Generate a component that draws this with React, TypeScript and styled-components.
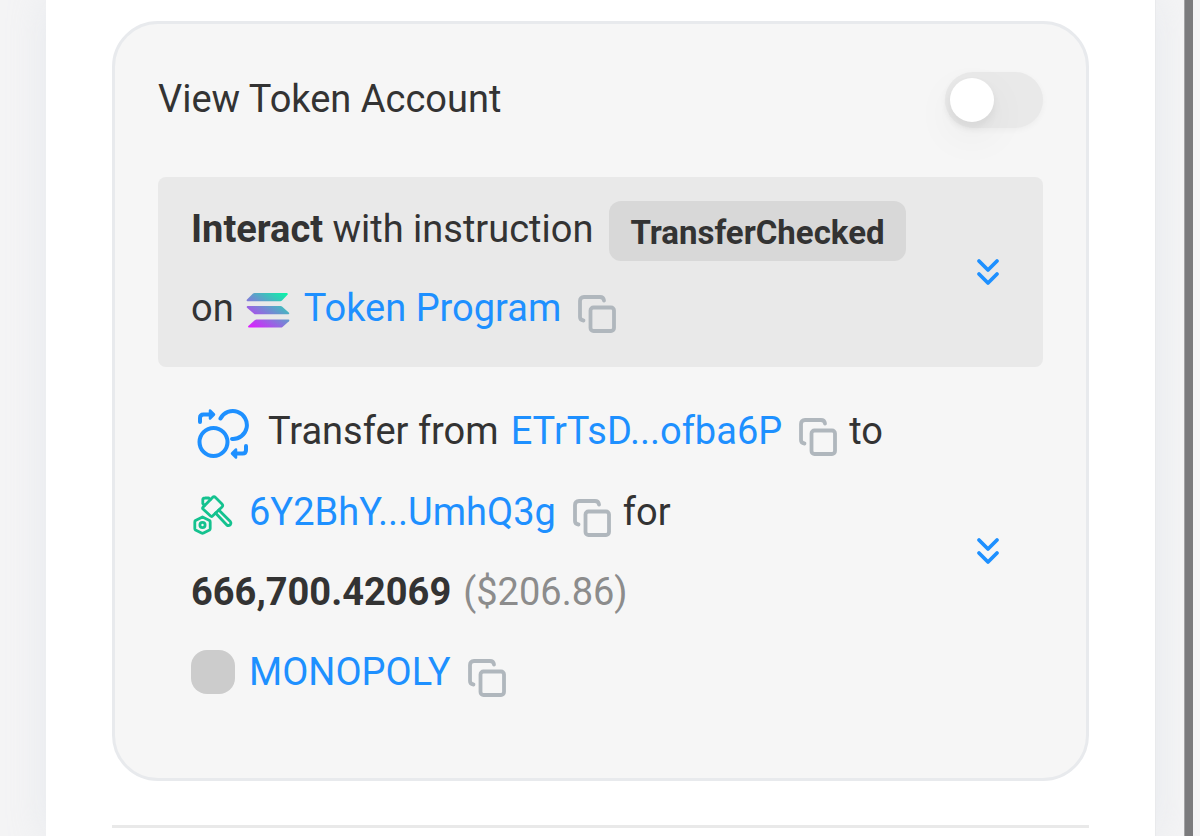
import React, { useState } from "react";
import styled, { createGlobalStyle } from "styled-components";

const GlobalStyle = createGlobalStyle`
  * { box-sizing: border-box; }
  body {
    margin: 0;
    background: #f4f4f5;
    color: #333333;
    font-family: Roboto, "Liberation Sans", sans-serif;
    font-size: 38px;
  }
`;

const Page = styled.div`
  display: flex;
  min-height: 100vh;
  padding-left: 46px;
  overflow: hidden;
`;

const Panel = styled.main`
  flex: 1;
  min-width: 0;
  padding: 21px 66px 8px;
  background: #ffffff;
  border-right: 1px solid #e9eaec;
  box-shadow: 0 0 36px rgba(200, 207, 222, 0.3);
`;

const ScrollTrack = styled.div`
  display: flex;
  justify-content: flex-end;
  width: 44px;
  padding-right: 7px;
`;

const ScrollThumb = styled.div`
  width: 9px;
  background: #7b7b7d;
  border-left: 1px solid #a3a3a5;
`;

const Card = styled.section`
  padding: 43px;
  background: #f6f6f6;
  border: 3px solid #e8eaed;
  border-radius: 46px;
`;

const CardHeader = styled.label`
  display: flex;
  align-items: center;
  justify-content: space-between;
  height: 66px;
  margin-bottom: 44px;
`;

const Title = styled.span`
  padding-bottom: 3px;
`;

const Switch = styled.input`
  appearance: none;
  display: flex;
  align-items: center;
  width: 98px;
  height: 56px;
  margin: 0;
  padding: 0 5px;
  background: #e9e9e9;
  border-radius: 28px;
  box-shadow: 0 2px 6px rgba(0, 0, 0, 0.04);
  cursor: pointer;

  &::before {
    content: "";
    width: 44px;
    height: 44px;
    background: #ffffff;
    border-radius: 50%;
    box-shadow: 0 5px 10px rgba(0, 0, 0, 0.06), 0 14px 44px rgba(0, 0, 0, 0.06);
  }

  &:checked {
    justify-content: flex-end;
    background: #1e90ff;
  }
`;

const Step = styled.div<{ $active?: boolean }>`
  display: flex;
  align-items: center;
  justify-content: space-between;
  padding: ${(p) => (p.$active ? "12px" : "23px")} 39px ${(p) => (p.$active ? "12px" : "23px")} 33px;
  background: ${(p) => (p.$active ? "#e9e9e9" : "transparent")};
  border-radius: 8px;
`;

const Lines = styled.div<{ $after?: number }>`
  flex: 1;
  min-width: 0;
  padding-bottom: ${(p) => p.$after ?? 0}px;
`;

const Line = styled.div<{ $height: number }>`
  display: flex;
  align-items: center;
  gap: 12px;
  height: ${(p) => p.$height}px;
  white-space: nowrap;
`;

const Muted = styled.span`
  color: #8c8c8c;
`;

const Link = styled.a`
  color: #1e90ff;
  text-decoration: none;
`;

const Tag = styled.span`
  margin: 4px 0 0 4px;
  padding: 3px 21px 0;
  background: #d8d8d8;
  border-radius: 12px;
  font-size: 33px;
  font-weight: 700;
  line-height: 57px;
`;

const IconButton = styled.button`
  display: flex;
  padding: 0;
  background: none;
  border: 0;
  cursor: pointer;
`;

const CopyButton = styled(IconButton)`
  margin-left: 5px;
  padding-top: 12px;
`;

const IconSlot = styled.span<{ $left?: number; $right?: number }>`
  display: flex;
  padding: 5px ${(p) => p.$right ?? 2}px 0 ${(p) => p.$left ?? 0}px;
`;

const TokenLogo = styled.span`
  width: 44px;
  height: 44px;
  margin-right: 2px;
  background: #cccccc;
  border-radius: 16px;
`;

const Divider = styled.hr`
  height: 3px;
  margin: 44px 0 0;
  background: #e9e9e9;
  border: 0;
`;

function Copy({ label }: { label: string }) {
  return (
    <CopyButton type="button" aria-label={label}>
      <svg width="38" height="38" viewBox="0 0 38 38" fill="none" stroke="#b0b7bd" strokeWidth="3.800" strokeLinecap="round">
        <rect x="12.500" y="12.500" width="23.500" height="23.500" rx="3" />
        <path d="M5.500 25.500 Q2 25 2 22 V6 Q2 2 6 2 H22 Q25.500 2 26 5.500" />
      </svg>
    </CopyButton>
  );
}

function Expand() {
  return (
    <IconButton type="button" aria-label="Show details">
      <svg width="32" height="32" viewBox="0 0 32 32" fill="none" stroke="#1e90ff" strokeWidth="3.800" strokeLinecap="round" strokeLinejoin="round">
        <path d="M7 5 L16 14 L25 5 M7 18 L16 27 L25 18" />
      </svg>
    </IconButton>
  );
}

function SolanaLogo() {
  return (
    <svg width="44" height="35" viewBox="0 0 44 35">
      <defs>
        <linearGradient id="solana" gradientUnits="userSpaceOnUse" x1="38" y1="-4" x2="10" y2="38">
          <stop offset="0" stopColor="#00ffa3" />
          <stop offset="1" stopColor="#dc1fff" />
        </linearGradient>
      </defs>
      <g fill="url(#solana)">
        <path d="M7 0.600 Q7.700 0 8.500 0 H40.800 Q42.500 0.500 41.500 1.800 L36 7.600 Q35.300 8.200 34.500 8.200 H1.500 Q0 7.800 1 6.500 Z" />
        <path d="M1 14.800 Q0.200 13.300 1.700 13 H34.500 Q35.500 13 36 13.500 L43 19.700 Q43.800 21 42.300 21.300 H9.500 Q8.500 21.300 8 20.800 Z" />
        <path d="M9 27 Q9.700 26.400 10.500 26.400 H42.500 Q44 26.900 43 28.200 L36.500 34 Q35.800 34.600 35 34.600 H3 Q1.500 34.200 2.300 32.900 Z" />
      </g>
    </svg>
  );
}

function TransferIcon() {
  return (
    <svg width="52" height="52" viewBox="0 0 52 52" fill="none" stroke="#1e90ff" strokeWidth="4" strokeLinecap="round" strokeLinejoin="round">
      <circle cx="16.500" cy="34" r="14" />
      <path d="M23.500 10.500 A14 14 0 1 1 35 31" />
      <path d="M3 14 V10 Q3 6.500 6.500 6.500 H14" />
      <path d="M13 2.500 L17 6.500 L13 10.500 Z" fill="#1e90ff" strokeWidth="2.500" />
      <path d="M49 38 V42 Q49 45.500 45.500 45.500 H38" />
      <path d="M39 41.500 L35 45.500 L39 49.500 Z" fill="#1e90ff" strokeWidth="2.500" />
    </svg>
  );
}

function HammerIcon() {
  return (
    <svg width="40" height="40" viewBox="0 0 40 40" fill="none" stroke="#14c28f" strokeWidth="2.800" strokeLinecap="round" strokeLinejoin="round">
      <path d="M9.500 22 L2.500 25.500 Q1.800 26 1.800 27 V33.500 Q1.800 34.500 2.500 35 L8.500 38 Q9.500 38.500 10.500 38 L16.500 35 Q17.200 34.500 17.200 33.500 V27 Q17.200 26 16.500 25.500 Z" />
      <circle cx="9.500" cy="30" r="2.600" />
      <path d="M10 12.300 L19.500 2.500 Q21 1 22.500 2.500 L29 9 Q30.500 10.500 29 12 L19.500 21 Q18.500 22 17.300 20.800 L10 14 Q9.200 13.200 10 12.300 Z" />
      <path d="M11.500 10.500 L9.800 8.500 V4.500 Q10 3 12 3 L15.500 2.800 L17.300 4.500" />
      <path d="M22.500 18 L33.800 30 Q35.500 31.200 37.200 29.800 Q38.500 28.200 37.300 26.500 L25.800 15" />
    </svg>
  );
}

export default function App() {
  const [checked, setChecked] = useState(false);
  return (
    <>
      <GlobalStyle />
      <Page>
        <Panel>
          <Card>
            <CardHeader>
              <Title>View Token Account</Title>
              <Switch type="checkbox" role="switch" checked={checked} onChange={(e) => setChecked(e.target.checked)} />
            </CardHeader>
            <Step $active>
              <Lines $after={8}>
                <Line $height={79}>
                  <span><b>Interact</b> with instruction</span>
                  <Tag>TransferChecked</Tag>
                </Line>
                <Line $height={79}>
                  <span>on</span>
                  <IconSlot><SolanaLogo /></IconSlot>
                  <Link href="#token-program">Token Program</Link>
                  <Copy label="Copy program address" />
                </Line>
              </Lines>
              <Expand />
            </Step>
            <Step>
              <Lines>
                <Line $height={82}>
                  <IconSlot $left={6} $right={7}><TransferIcon /></IconSlot>
                  <span>Transfer from</span>
                  <Link href="#sender">ETrTsD...ofba6P</Link>
                  <Copy label="Copy sender address" />
                  <span>to</span>
                </Line>
                <Line $height={80}>
                  <IconSlot $left={2} $right={4}><HammerIcon /></IconSlot>
                  <Link href="#receiver">6Y2BhY...UmhQ3g</Link>
                  <Copy label="Copy receiver address" />
                  <span>for</span>
                </Line>
                <Line $height={80}>
                  <b>666,700.42069</b>
                  <Muted>($206.86)</Muted>
                </Line>
                <Line $height={80}>
                  <TokenLogo />
                  <Link href="#monopoly">MONOPOLY</Link>
                  <Copy label="Copy token address" />
                </Line>
              </Lines>
              <Expand />
            </Step>
          </Card>
          <Divider />
        </Panel>
        <ScrollTrack><ScrollThumb /></ScrollTrack>
      </Page>
    </>
  );
}
